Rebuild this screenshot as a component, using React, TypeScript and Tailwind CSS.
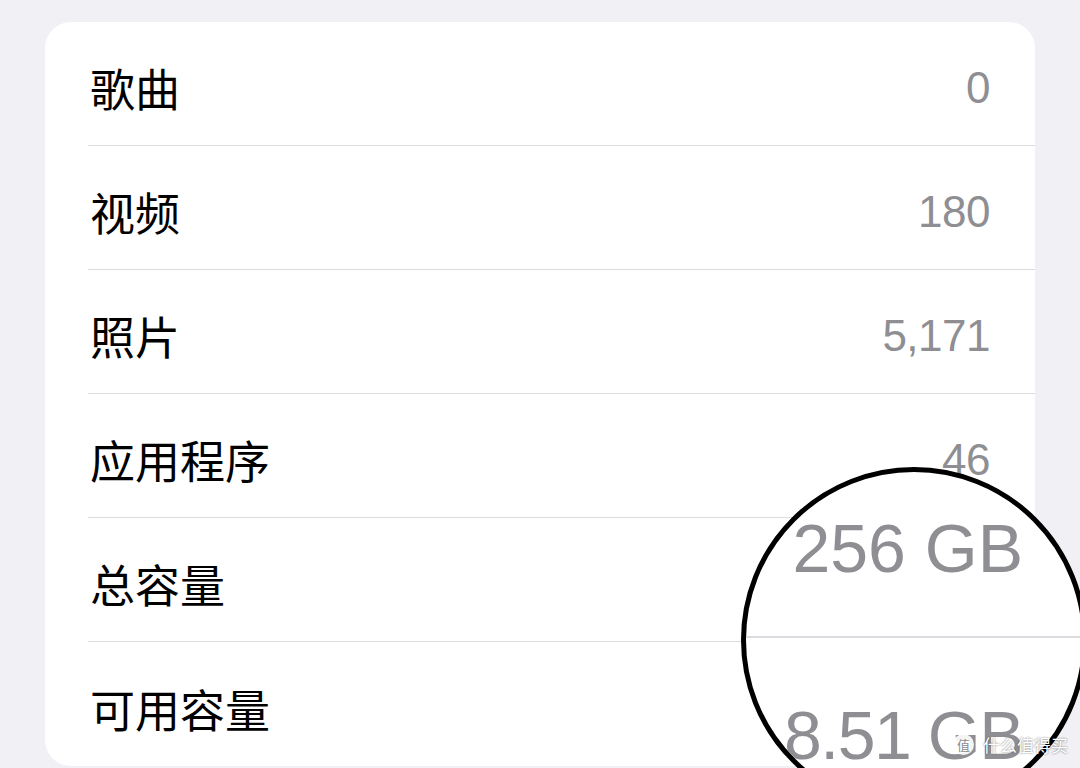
type Row = { label: string; value: string; zoomed?: boolean };

const rows: Row[] = [
  { label: "歌曲", value: "0" },
  { label: "视频", value: "180" },
  { label: "照片", value: "5,171" },
  { label: "应用程序", value: "46" },
  // these two values are drawn inside the magnifier instead
  { label: "总容量", value: "256 GB", zoomed: true },
  { label: "可用容量", value: "8.51 GB", zoomed: true },
];

const cjk = { fontFamily: '"Noto Sans CJK SC", "Noto Sans", sans-serif' };
const latin = { fontFamily: '"Liberation Sans", Arial, sans-serif' };

export default function App() {
  return (
    <main className="relative w-[1080px] h-[768px] overflow-hidden bg-[#f0f0f5] pt-[22px] px-[45px]">
      {/* Storage list */}
      <div className="bg-white rounded-[26px] overflow-hidden">
        {rows.map((r, i) => (
          <div key={r.label} className="pl-[43px]">
            <div
              className={
                "h-[124px] flex items-center justify-between pr-[45px] pt-2 " +
                (i < rows.length - 1 ? "border-b border-[#dcdce0]" : "")
              }
            >
              <span className="pl-[2px] text-[45px] leading-none text-black" style={cjk}>
                {r.label}
              </span>
              {!r.zoomed && (
                <span className="text-[44px] leading-none text-[#8e8e93] tracking-[-0.5px]" style={latin}>
                  {r.value}
                </span>
              )}
            </div>
          </div>
        ))}
      </div>

      {/* Magnifier over the capacity values */}
      <div className="absolute left-[741px] top-[467px] w-[346px] h-[346px] rounded-full border-[5px] border-black bg-white overflow-hidden">
        <div className="flex flex-col items-end pr-[59px] pt-[42px]">
          <span className="text-[68px] leading-none text-[#8e8e93] whitespace-nowrap" style={latin}>
            256 GB
          </span>
        </div>
        <div className="mt-[54px] h-[2px] bg-[#dcdce0]" />
        <div className="flex flex-col items-end pr-[59px] pt-[63px]">
          <span
            className="text-[68px] leading-none text-[#8e8e93] whitespace-nowrap tracking-[-1.5px]"
            style={latin}
          >
            8.51 GB
          </span>
        </div>
      </div>

      {/* Watermark */}
      <div className="absolute left-[953px] top-[734px] flex items-center gap-[9px]">
        <div
          className="w-[21px] h-[21px] rounded-full bg-white/90 flex items-center justify-center text-[13px] leading-none text-[#8a8a8a]"
          style={cjk}
        >
          值
        </div>
        <span
          className="text-[17px] leading-none text-white [text-shadow:0_0_2px_rgba(0,0,0,0.6)]"
          style={cjk}
        >
          什么值得买
        </span>
      </div>
    </main>
  );
}
